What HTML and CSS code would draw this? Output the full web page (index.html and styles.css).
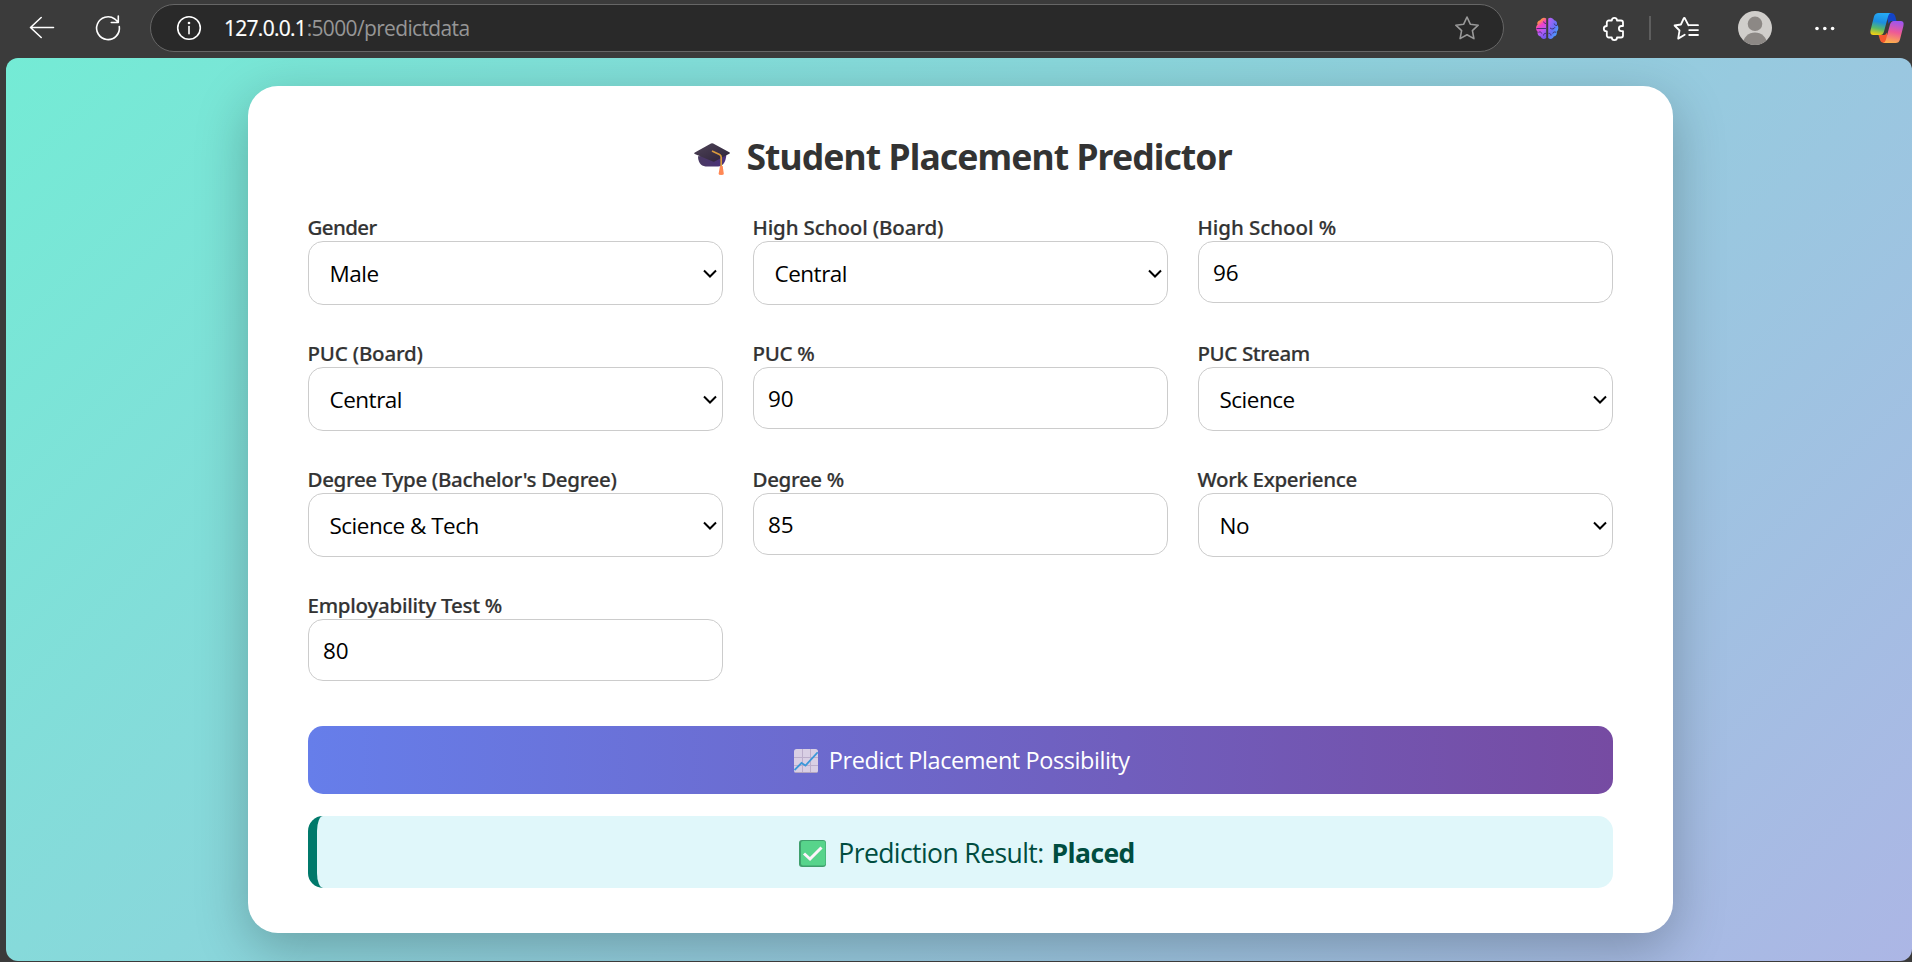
FILE: index.html
```html
<!DOCTYPE html>
<html lang="en">
<head>
<meta charset="utf-8">
<title>Student Placement Predictor</title>
<link rel="stylesheet" href="styles.css">
</head>
<body>
<header class="toolbar">
  <svg class="ico back" viewBox="0 0 28 28"><path d="M25.500 13.500H2.500M13.200 3.500L2.500 13.500L13.200 23.500"/></svg>
  <svg class="ico reload" viewBox="0 0 28 28"><path d="M25.300 12.500A11.400 11.400 0 1 1 20.800 5L24.300 8.200M24.300 2v6.500h-7"/></svg>
  <div class="address">
    <svg class="ico info" viewBox="0 0 28 28"><circle cx="14" cy="14" r="11.300"/><path d="M14 12.500v7.300"/><circle class="dot" cx="14" cy="9" r="1.300"/></svg>
    <span class="url"><span class="host">127.0.0.1</span><span class="path">:5000/predictdata</span></span>
    <svg class="ico star" viewBox="0 0 28 28"><path d="M14 3L17.300 10.200L25.200 11.200L19.400 16.600L20.900 24.600L14 20.800L7.100 24.600L8.600 16.600L2.800 11.200L10.700 10.200Z"/></svg>
  </div>
  <svg class="brain" viewBox="0 0 28 28">
    <defs><linearGradient id="bl" x1="0.200" y1="0" x2="0.600" y2="1"><stop offset="0" stop-color="#ffa02c"/><stop offset=".2" stop-color="#ff8a50"/><stop offset=".4" stop-color="#f23fc8"/><stop offset=".7" stop-color="#b45cf5"/><stop offset="1" stop-color="#7657f0"/></linearGradient>
    <linearGradient id="br" x1="0" y1="0" x2="1" y2="1"><stop offset="0" stop-color="#c45bf0"/><stop offset=".5" stop-color="#6a70f8"/><stop offset="1" stop-color="#35b8ff"/></linearGradient></defs>
    <path fill="url(#bl)" d="M13.200 4.500V24C11 25.800 8.500 24.800 7.600 22.500C5.200 22.200 4 20 4.700 17.800C2.500 15.800 2.500 12.200 4.600 10.800C3.800 8.500 5.200 6.500 7.200 6.300C8.500 3.500 11.500 3 13.200 4.500Z"/>
    <path fill="url(#br)" d="M15.200 4.500V24C17.400 25.800 19.900 24.800 20.800 22.500C23.200 22.200 24.400 20 23.700 17.800C25.900 15.800 25.900 12.200 23.800 10.800C24.600 8.500 23.200 6.500 21.200 6.300C19.900 3.500 16.900 3 15.200 4.500Z"/>
    <path class="folds" d="M13 9.500c-1.800 0-2.200-1-2.400-2M3.500 14.500h9.500M10.500 21.500c0-1.500 1-2.200 2.500-2.200M5.500 18.300c1.500-.8 3-.2 3.200 1.200M24 11.500c-1.800 0-2.700-.8-2.800-2M17 14c2 1.500 4 1.200 5-.8M18 21.500c0-1.500-1-2.200-2.500-2.200M23 18.300c-1.500-.8-3-.2-3.200 1.200"/>
  </svg>
  <svg class="ico puzzle" viewBox="0 0 28 28"><path d="M6.800 8.500a2 2 0 0 1 2-2H11.800C11.800 2.900 17 2.900 17 6.500H21a2 2 0 0 1 2 2V12H21.500C18 12 18 17.200 21.500 17.200H23V21.500a2 2 0 0 1-2 2H17C17 27.100 11.800 27.100 11.800 23.500H8.800a2 2 0 0 1-2-2V17.300C2.800 17.300 2.800 12 6.800 12Z"/></svg>
  <span class="divider"></span>
  <svg class="ico favs" viewBox="0 0 28 28"><path d="M16.500 11.300L12.900 4.300Q12.300 3.400 11.700 4.500L8.900 10.500L2.600 11.500L7.500 16.500L6.200 24.600L12.700 20.800M17.200 11.200H26M17.200 16.100H26M17.200 21H26"/></svg>
  <svg class="avatar" viewBox="0 0 34 34"><defs><clipPath id="av"><circle cx="17" cy="17" r="17"/></clipPath></defs><g clip-path="url(#av)"><path fill="#d0cecb" d="M0 0h34v34H0z"/><circle cx="17" cy="12.800" r="7.300" fill="#8c8885"/><ellipse cx="17" cy="32.500" rx="11.800" ry="11" fill="#8c8885"/></g></svg>
  <svg class="dots" viewBox="0 0 28 28"><circle cx="6" cy="14.500" r="1.800"/><circle cx="13.800" cy="14.500" r="1.800"/><circle cx="21.600" cy="14.500" r="1.800"/></svg>
  <svg class="copilot" viewBox="0 0 36 32">
    <defs><linearGradient id="c1" x1=".5" y1="0" x2=".3" y2="1"><stop offset="0" stop-color="#25a9f4"/><stop offset=".4" stop-color="#1c8de0"/><stop offset=".7" stop-color="#57b96b"/><stop offset="1" stop-color="#f5d012"/></linearGradient>
    <linearGradient id="c2" x1=".6" y1="0" x2=".4" y2="1"><stop offset="0" stop-color="#9d55ef"/><stop offset=".5" stop-color="#ee5a96"/><stop offset="1" stop-color="#fdb04c"/></linearGradient></defs>
    <path fill="#1344c8" d="M17 1h5.500q2.800 0 3.600 2.700L27.500 9H23q-2.500 0-3.400 3Z"/>
    <path fill="#f4592f" d="M9.500 23H15q1.800 0 2.600-2.500L20 31h-5.500q-2.500 0-3.400-2.800Z"/>
    <path fill="url(#c1)" d="M9.500 1H22q-2 0-2.800 3L15 19.500Q14.100 23 11.300 23H4.500Q.4 23 1.600 18L5 4.500Q6 1 9.500 1Z"/>
    <path fill="url(#c2)" d="M26.500 31H14q2 0 2.800-3L21 12.500Q22 9 24.800 9h6.700q4.100 0 2.900 5L31 27.500Q30 31 26.500 31Z"/>
  </svg>
</header>
<main class="page">
  <section class="card">
    <h2 class="title">
      <svg class="cap" viewBox="0 0 36 36" preserveAspectRatio="none"><defs><linearGradient id="cp" x1="0" y1="0" x2="1" y2="1"><stop offset="0" stop-color="#4f4458"/><stop offset="1" stop-color="#2c2138"/></linearGradient><linearGradient id="cb" x1="0" y1="0" x2="1" y2="0"><stop offset="0" stop-color="#4a3a62"/><stop offset="1" stop-color="#4a2f7d"/></linearGradient></defs>
        <path fill="url(#cb)" d="M4 14.500C4 20 6.500 25.500 11.500 25.500H24C29 25.500 32.300 20 32.300 12Z"/><path fill="url(#cp)" d="M17 .6Q18 0 19.200.6L35.300 10Q36.400 10.800 35.300 11.700L20.500 20.200Q19.500 20.700 18.200 20L.8 12Q-.4 11.200.8 10.300Z"/>
        <path fill="none" stroke="#d99a3c" stroke-width="1.700" d="M18 8.800L25.500 12.500Q27.200 13.400 27.200 15.500V26"/><path fill="#ff8855" d="M26 25h2.700l1.100 8.500q.2 1.500-2.600 1.500t-2.600-1.500Z"/></svg>
      <span>Student Placement Predictor</span>
    </h2>
    <form class="form">
      <div class="fields">
        <div class="field"><label>Gender</label><div class="pick"><select><option>Male</option></select><svg viewBox="0 0 14 9"><path d="M1 1.500L7 7.500L13 1.500"/></svg></div></div>
        <div class="field"><label>High School (Board)</label><div class="pick"><select><option>Central</option></select><svg viewBox="0 0 14 9"><path d="M1 1.500L7 7.500L13 1.500"/></svg></div></div>
        <div class="field"><label>High School %</label><input type="text" value="96"></div>
        <div class="field"><label>PUC (Board)</label><div class="pick"><select><option>Central</option></select><svg viewBox="0 0 14 9"><path d="M1 1.500L7 7.500L13 1.500"/></svg></div></div>
        <div class="field"><label>PUC %</label><input type="text" value="90"></div>
        <div class="field"><label>PUC Stream</label><div class="pick"><select><option>Science</option></select><svg viewBox="0 0 14 9"><path d="M1 1.500L7 7.500L13 1.500"/></svg></div></div>
        <div class="field"><label>Degree Type (Bachelor's Degree)</label><div class="pick"><select><option>Science &amp; Tech</option></select><svg viewBox="0 0 14 9"><path d="M1 1.500L7 7.500L13 1.500"/></svg></div></div>
        <div class="field"><label>Degree %</label><input type="text" value="85"></div>
        <div class="field"><label>Work Experience</label><div class="pick"><select><option>No</option></select><svg viewBox="0 0 14 9"><path d="M1 1.500L7 7.500L13 1.500"/></svg></div></div>
        <div class="field"><label>Employability Test %</label><input type="text" value="80"></div>
      </div>
      <button type="button" class="submit">
        <svg class="chart" viewBox="0 0 24 24"><rect width="24" height="24" rx="2.500" fill="#d9cfe4"/><path stroke="#bcaecb" stroke-width="1" fill="none" d="M0 8.500h24M0 16.500h24M8.500 0v24M16.500 0v24"/><path stroke="#b3a5c0" stroke-width="1" d="M1 23.500h22"/><path fill="none" stroke="#3b97d9" stroke-width="1.800" d="M.5 21L7.500 14L11.500 16.500L23.700 3.300"/></svg>
        <span>Predict Placement Possibility</span>
      </button>
    </form>
    <div class="result">
      <svg class="check" viewBox="0 0 27 27"><rect width="27" height="27" rx="3" fill="#3f9f6c"/><rect x="2" y="1" width="24.500" height="24.500" rx="2" fill="#57d48b"/><path fill="none" stroke="#fdf3fb" stroke-width="3" d="M5 13.500L11 19L22.500 7.500"/></svg>
      <span class="lead">Prediction Result:</span><strong>Placed</strong>
    </div>
  </section>
</main>
</body>
</html>
```
FILE: styles.css
```css
* { box-sizing: border-box; }
body {
  margin: 0;
  height: 962px;
  overflow: hidden;
  background: #3b3b3b;
  font-family: "Open Sans", "Noto Sans", sans-serif;
  display: flex;
  flex-direction: column;
}
svg { display: block; flex: none; }

/* Browser toolbar */
.toolbar {
  height: 58px;
  flex: none;
  display: flex;
  align-items: center;
  padding: 0 0 2px 28px;
}
.ico {
  width: 28px;
  height: 28px;
  fill: none;
  stroke: #fff;
  stroke-width: 1.6;
  stroke-linecap: round;
  stroke-linejoin: round;
}
.reload { margin-left: 38px; }
.address {
  width: 1354px;
  height: 48px;
  margin-left: 28px;
  border: 1.5px solid #666;
  border-radius: 24px;
  background: #292929;
  display: flex;
  align-items: center;
  padding: 0 22px 0 24px;
  flex: none;
}
.info .dot { fill: #fff; stroke: none; }
.url {
  flex: 1;
  margin-left: 21px;
  font-size: 21px;
  line-height: 30px;
  white-space: nowrap;
}
.host { color: #fff; letter-spacing: -0.72px; -webkit-text-stroke: 0.2px #fff; }
.path { color: #969696; letter-spacing: -0.65px; margin-left: 0.5px; }
.star { stroke: #999; }
.brain { width: 28px; height: 28px; margin-left: 29px; }
.folds { fill: none; stroke: #3b2a6b; stroke-width: 0.9; }
.puzzle { margin-left: 39px; stroke-width: 1.8; }
.divider { width: 2px; height: 24px; margin-left: 21px; background: #5e5e5e; }
.favs { margin-left: 21px; stroke-width: 1.8; }
.avatar { width: 34px; height: 34px; margin-left: 38px; }
.dots { width: 28px; height: 28px; margin-left: 39px; fill: #fff; }
.copilot { width: 36px; height: 32px; margin-left: 30px; }

/* Page */
.page {
  height: 903px;
  margin-left: 6px;
  padding: 28px 0 0 242px;
  border-radius: 12px;
  overflow: hidden;
  background: linear-gradient(135deg, #74ebd5, #acb6e5);
}
.card {
  width: 1425px;
  height: 847px;
  padding: 46px 60px 0;
  border-radius: 30px;
  background: #fff;
  box-shadow: 0 15px 52px rgba(0, 0, 0, 0.25);
}
.title {
  margin: 0;
  height: 48px;
  padding-left: 5px;
  display: flex;
  justify-content: center;
  align-items: center;
  gap: 16px;
  color: #333;
  font-family: "Noto Sans", sans-serif;
  font-size: 35.5px;
  line-height: 48px;
  letter-spacing: -0.9px;
  white-space: nowrap;
}
.cap { width: 36px; height: 33px; margin-top: 7px; }
.fields {
  display: grid;
  grid-template-columns: repeat(3, 415px);
  gap: 30px;
  margin-top: 33px;
}
.field { height: 96px; }
.field label {
  display: block;
  height: 28px;
  margin-left: -0.5px;
  line-height: 28px;
  font-family: "Noto Sans", sans-serif;
  font-size: 20.5px;
  font-weight: 500;
  color: #333;
  letter-spacing: -0.33px;
  white-space: nowrap;
  -webkit-text-stroke: 0.2px #333;
}
.field:nth-child(1) label { letter-spacing: -0.6px; }
.field:nth-child(2) label { letter-spacing: -0.13px; }
.field:nth-child(3) label { letter-spacing: -0.06px; }
.field:nth-child(4) label { letter-spacing: -0.2px; }
.field:nth-child(6) label { letter-spacing: -0.4px; }
.field:nth-child(9) label { letter-spacing: -0.35px; }
.field:nth-child(10) label { letter-spacing: -0.25px; }
.field input,
.field select {
  display: block;
  width: 100%;
  margin: 0;
  border: 1.5px solid #ccc;
  border-radius: 15px;
  background: #fff;
  color: #000;
  font-family: inherit;
  font-size: 22.5px;
  outline: none;
}
.field input { height: 62px; padding: 0 14px; }
.field select {
  appearance: none;
  height: 64px;
  padding: 0 20.5px;
  letter-spacing: -0.5px;
}
.pick { position: relative; }
.pick svg {
  position: absolute;
  right: 6px;
  top: 28px;
  width: 14px;
  height: 9px;
  fill: none;
  stroke: #000;
  stroke-width: 2;
}
.submit {
  width: 100%;
  height: 68px;
  margin-top: 39px;
  padding: 0 0 0 3px;
  border: 0;
  border-radius: 15px;
  background: linear-gradient(to right, #667eea, #764ba2);
  color: #fff;
  font-family: inherit;
  font-size: 23.5px;
  letter-spacing: -0.43px;
  display: flex;
  justify-content: center;
  align-items: center;
  gap: 10.5px;
}
.chart { width: 24px; height: 24px; margin-top: 2px; }
.result {
  height: 72px;
  margin-top: 22px;
  padding: 2px 0 0 4px;
  border-left: 9px solid #00796b;
  border-radius: 15px;
  background: #e0f7fa;
  color: #004d40;
  font-size: 26.5px;
  display: flex;
  justify-content: center;
  align-items: center;
  white-space: nowrap;
}
.check { width: 27px; height: 27px; margin-right: 12px; }
.lead { letter-spacing: -0.58px; margin-right: 8px; }
.result strong { letter-spacing: -0.6px; }
```
